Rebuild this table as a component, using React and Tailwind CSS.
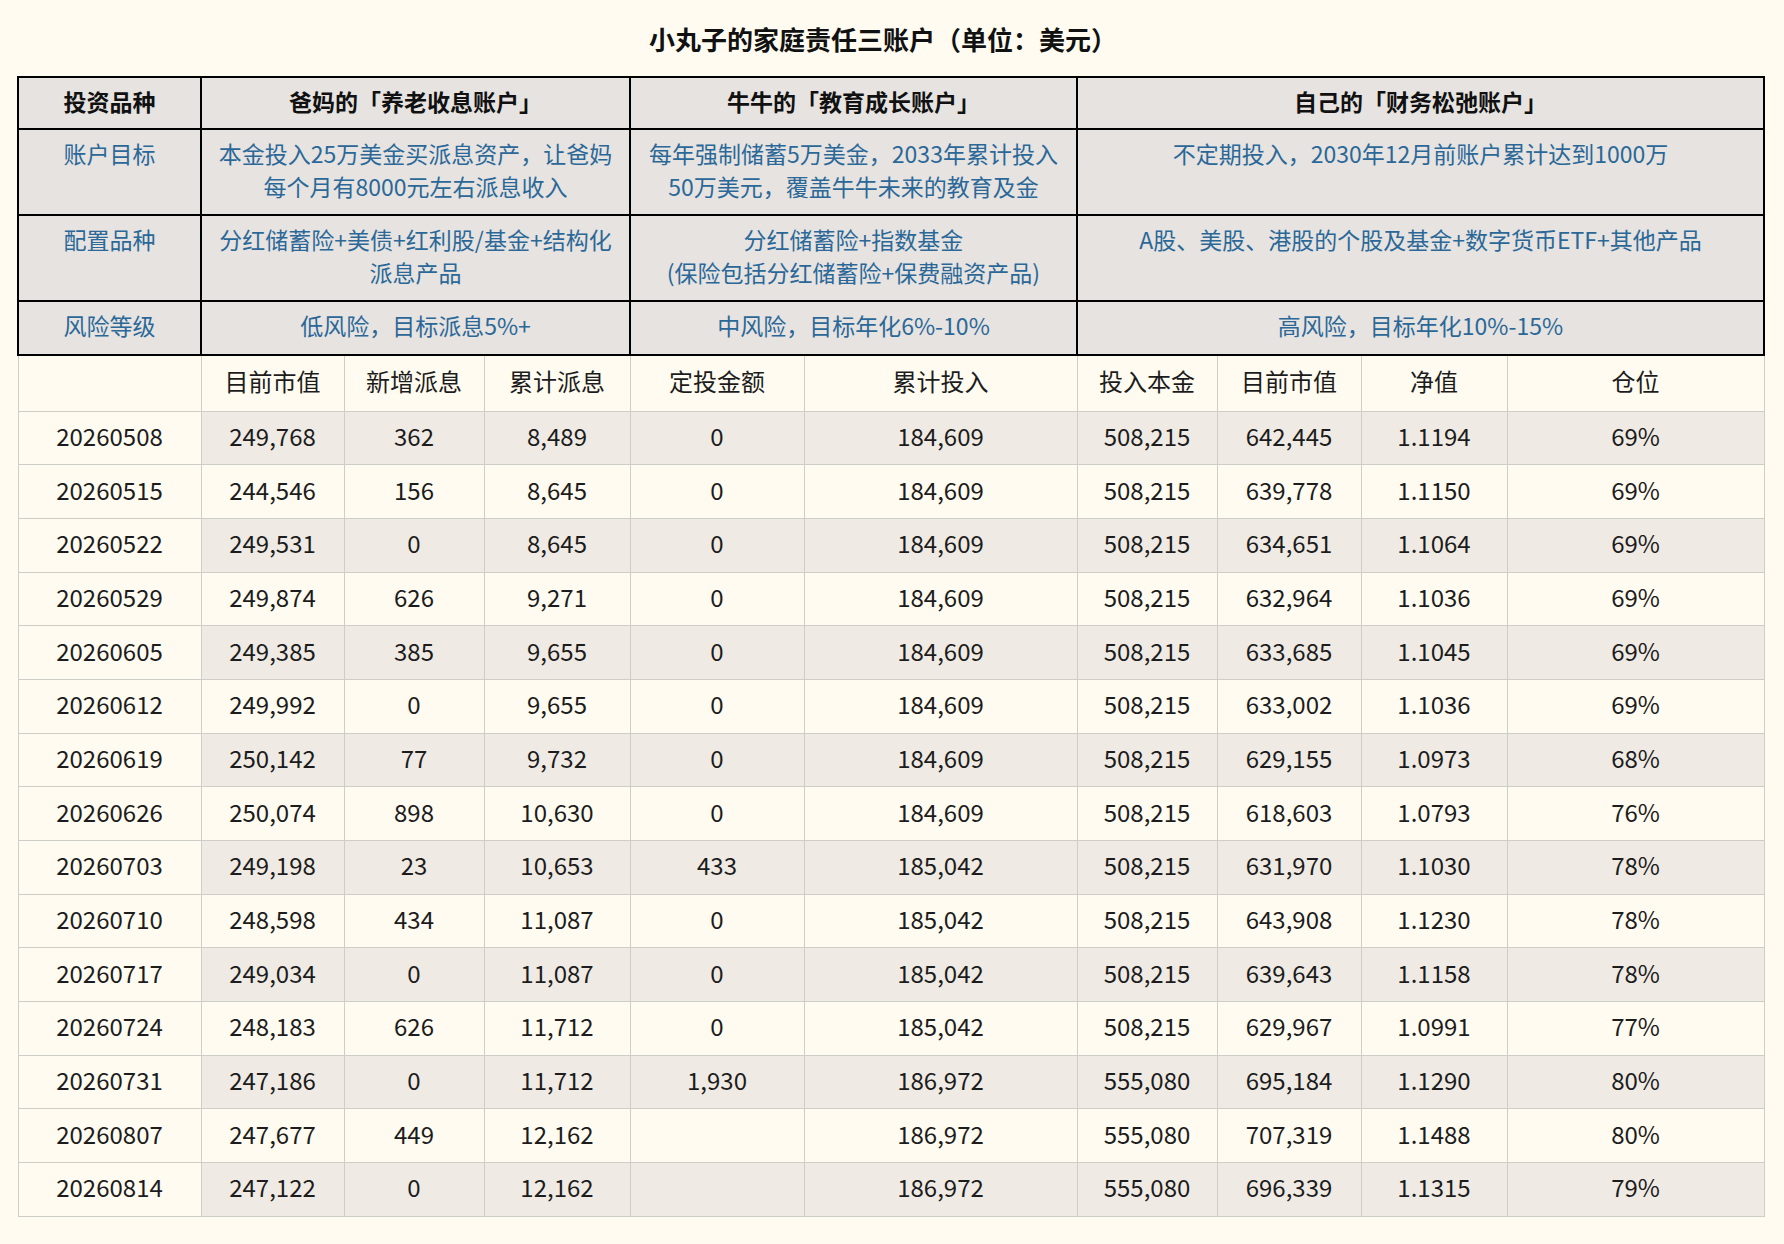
import React from "react";

const font = { fontFamily: '"Noto Sans CJK SC", "Noto Sans", sans-serif' };

const rows = [
  ["20260508", "249,768", "362", "8,489", "0", "184,609", "508,215", "642,445", "1.1194", "69%"],
  ["20260515", "244,546", "156", "8,645", "0", "184,609", "508,215", "639,778", "1.1150", "69%"],
  ["20260522", "249,531", "0", "8,645", "0", "184,609", "508,215", "634,651", "1.1064", "69%"],
  ["20260529", "249,874", "626", "9,271", "0", "184,609", "508,215", "632,964", "1.1036", "69%"],
  ["20260605", "249,385", "385", "9,655", "0", "184,609", "508,215", "633,685", "1.1045", "69%"],
  ["20260612", "249,992", "0", "9,655", "0", "184,609", "508,215", "633,002", "1.1036", "69%"],
  ["20260619", "250,142", "77", "9,732", "0", "184,609", "508,215", "629,155", "1.0973", "68%"],
  ["20260626", "250,074", "898", "10,630", "0", "184,609", "508,215", "618,603", "1.0793", "76%"],
  ["20260703", "249,198", "23", "10,653", "433", "185,042", "508,215", "631,970", "1.1030", "78%"],
  ["20260710", "248,598", "434", "11,087", "0", "185,042", "508,215", "643,908", "1.1230", "78%"],
  ["20260717", "249,034", "0", "11,087", "0", "185,042", "508,215", "639,643", "1.1158", "78%"],
  ["20260724", "248,183", "626", "11,712", "0", "185,042", "508,215", "629,967", "1.0991", "77%"],
  ["20260731", "247,186", "0", "11,712", "1,930", "186,972", "555,080", "695,184", "1.1290", "80%"],
  ["20260807", "247,677", "449", "12,162", "", "186,972", "555,080", "707,319", "1.1488", "80%"],
  ["20260814", "247,122", "0", "12,162", "", "186,972", "555,080", "696,339", "1.1315", "79%"],
];

const cols = ["", "目前市值", "新增派息", "累计派息", "定投金额", "累计投入", "投入本金", "目前市值", "净值", "仓位"];
const widths = [183, 143, 140, 146, 174, 273, 140, 144, 146, 257];
const spans = [3, 2, 4];

const info = [
  {
    label: "账户目标",
    h: "h-[86px]",
    cells: [
      ["本金投入25万美金买派息资产，让爸妈", "每个月有8000元左右派息收入"],
      ["每年强制储蓄5万美金，2033年累计投入", "50万美元，覆盖牛牛未来的教育及金"],
      ["不定期投入，2030年12月前账户累计达到1000万"],
    ],
  },
  {
    label: "配置品种",
    h: "h-[86px]",
    cells: [
      ["分红储蓄险+美债+红利股/基金+结构化", "派息产品"],
      ["分红储蓄险+指数基金", "(保险包括分红储蓄险+保费融资产品)"],
      ["A股、美股、港股的个股及基金+数字货币ETF+其他产品"],
    ],
  },
  {
    label: "风险等级",
    h: "h-[54px]",
    cells: [["低风险，目标派息5%+"], ["中风险，目标年化6%-10%"], ["高风险，目标年化10%-15%"]],
  },
];

const heads = ["爸妈的「养老收息账户」", "牛牛的「教育成长账户」", "自己的「财务松弛账户」"];

export default function App() {
  return (
    <div className="min-h-[1244px] w-full bg-[#fffbf0]" style={font}>
      <div className="w-[1746px] ml-[17px]">
        <h1 className="h-[76px] pt-[20px] text-center text-[26px] leading-[38px] font-bold text-[#111] pr-[14px]">
          小丸子的家庭责任三账户（单位：美元）
        </h1>
        <table className="table-fixed border-collapse w-[1746px]">
          <colgroup>
            {widths.map((w, i) => (
              <col key={i} style={{ width: w }} />
            ))}
          </colgroup>
          <tbody>
            <tr className="h-[52px] bg-[#e6e3e0]">
              <td className="border-2 border-black align-top pt-[7px] text-center text-[23px] leading-[33px] font-bold text-[#111]">
                投资品种
              </td>
              {heads.map((h, i) => (
                <td
                  key={h}
                  colSpan={spans[i]}
                  className="border-2 border-black align-top pt-[7px] text-center text-[23px] leading-[33px] font-bold text-[#111]"
                >
                  {h}
                </td>
              ))}
            </tr>
            {info.map((r) => (
              <tr key={r.label} className={`${r.h} bg-[#e6e3e0]`}>
                <td className="border-2 border-black align-top pt-[7px] text-center text-[23px] leading-[33px] text-[#2b6898]">
                  {r.label}
                </td>
                {r.cells.map((lines, i) => (
                  <td
                    key={i}
                    colSpan={spans[i]}
                    className="border-2 border-black align-top pt-[7px] px-1 text-center text-[23px] leading-[33px] text-[#2b6898]"
                  >
                    {lines.map((l, j) => (
                      <div key={j} className="whitespace-nowrap">
                        {l}
                      </div>
                    ))}
                  </td>
                ))}
              </tr>
            ))}
            <tr className="h-[56px]">
              {cols.map((c, i) => (
                <td key={i} className="border border-[#cfcdc8] pb-[4px] text-center text-[24px] text-[#1c1c1c]">
                  {c}
                </td>
              ))}
            </tr>
            {rows.map((r, ri) => (
              <tr key={r[0]} className="h-[53.7px]">
                {r.map((v, i) => (
                  <td
                    key={i}
                    className={`border border-[#cfcdc8] pb-[4px] text-center text-[24px] text-[#1c1c1c] ${
                      ri % 2 === 0 && i > 0 ? "bg-[#efebe4]" : ""
                    }`}
                  >
                    {v}
                  </td>
                ))}
              </tr>
            ))}
          </tbody>
        </table>
      </div>
    </div>
  );
}
